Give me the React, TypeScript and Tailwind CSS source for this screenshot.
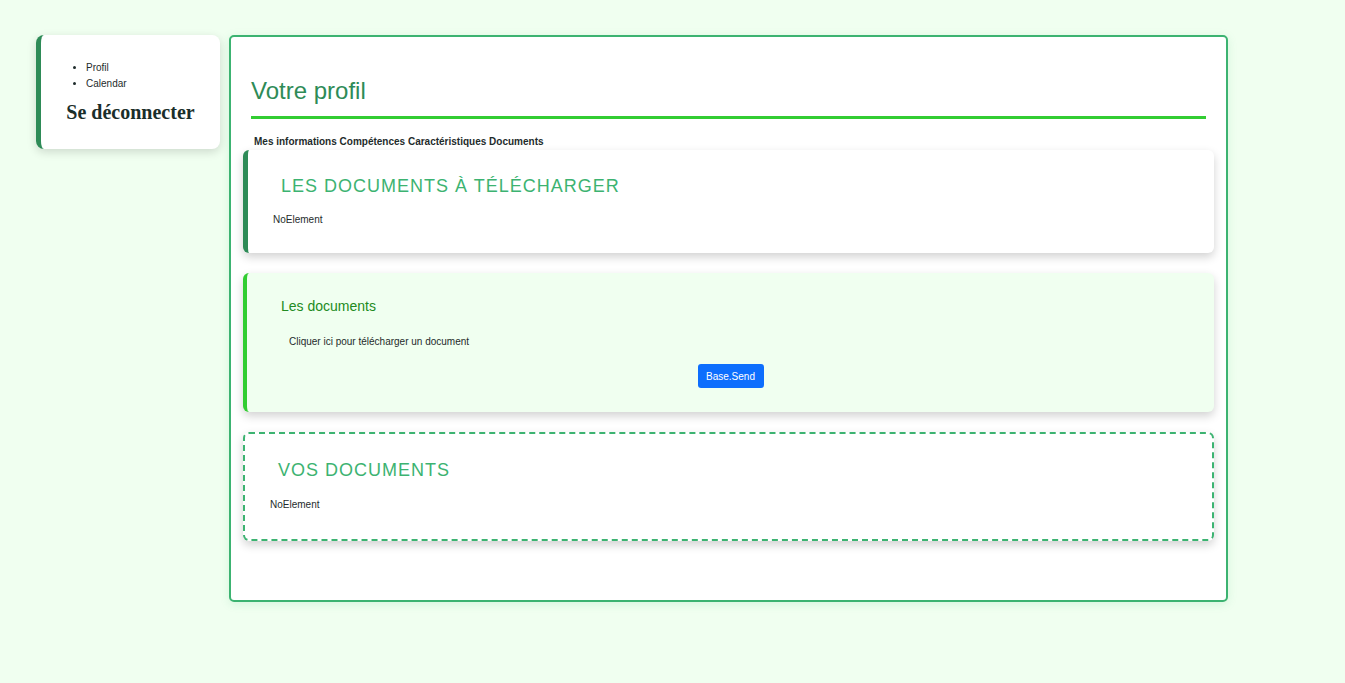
export default function App() {
  return (
    <div className="min-h-screen bg-[#f0fff0] pl-[36px] pt-[35px] font-['Liberation_Sans',Arial,sans-serif] text-[#1e2b2b]">
      <div className="flex items-start gap-[9px]">
        <aside className="w-[184px] shrink-0 rounded-lg border-l-[5px] border-[#2e8b57] bg-white pt-[25px] pb-[25px] shadow-[0_3px_10px_rgba(0,0,0,0.15)]">
          <ul className="list-disc pl-[45px] text-[10px] leading-4">
            <li>Profil</li>
            <li>Calendar</li>
          </ul>
          <div className="mt-[8px] text-center font-['Liberation_Serif','Times_New_Roman',serif] text-[20px] font-bold leading-6 text-[#1a2e2a]">
            Se déconnecter
          </div>
        </aside>

        <main className="w-[999px] rounded-[5px] border-2 border-[#3cb371] bg-white px-3 pb-[59px] pt-[28px] shadow-[0_2px_10px_rgba(60,179,113,0.15)]">
          <div className="mx-2 border-b-[3px] border-[#32cd32] pt-[12px] pb-[11px]">
            <h1 className="text-[24px] leading-[28px] text-[#2e8b57]">Votre profil</h1>
          </div>
          <nav className="mx-[11px] mt-[16px] mb-[2px] text-[10px] font-bold leading-[13px] text-[#1e2b2b]">
            Mes informations Compétences Caractéristiques Documents
          </nav>

          <section className="rounded-md border-l-[5px] border-[#2e8b57] bg-white pl-[25px] pt-[25px] pb-[27px] shadow-[0_4px_10px_rgba(0,0,0,0.18)]">
            <h2 className="ml-2 text-[18px] uppercase leading-[22px] tracking-[1px] text-[#3cb371]">
              Les documents à télécharger
            </h2>
            <p className="mt-[16px] text-[10px] leading-[13px]">NoElement</p>
          </section>

          <section className="mt-5 rounded-md border-l-4 border-[#32cd32] bg-[#f0fff0] pl-[34px] pr-[34px] pt-[24px] pb-[24px] shadow-[0_4px_10px_rgba(0,0,0,0.18)]">
            <h3 className="text-[14px] leading-[18px] text-[#228b22]">Les documents</h3>
            <p className="mt-[20px] pl-2 text-[10px] leading-[13px]">Cliquer ici pour télécharger un document</p>
            <div className="mt-[16px] flex justify-center">
              <button className="h-6 w-[66px] rounded-[3px] bg-[#0d6efd] text-[10px] text-white">Base.Send</button>
            </div>
          </section>

          <section className="mt-5 rounded-md border-2 border-dashed border-[#3cb371] bg-white pl-[25px] pt-[25px] pb-[28px] shadow-[0_4px_10px_rgba(0,0,0,0.18)]">
            <h2 className="ml-2 text-[18px] uppercase leading-[22px] tracking-[1px] text-[#3cb371]">Vos documents</h2>
            <p className="mt-[17px] text-[10px] leading-[13px]">NoElement</p>
          </section>
        </main>
      </div>
    </div>
  );
}
